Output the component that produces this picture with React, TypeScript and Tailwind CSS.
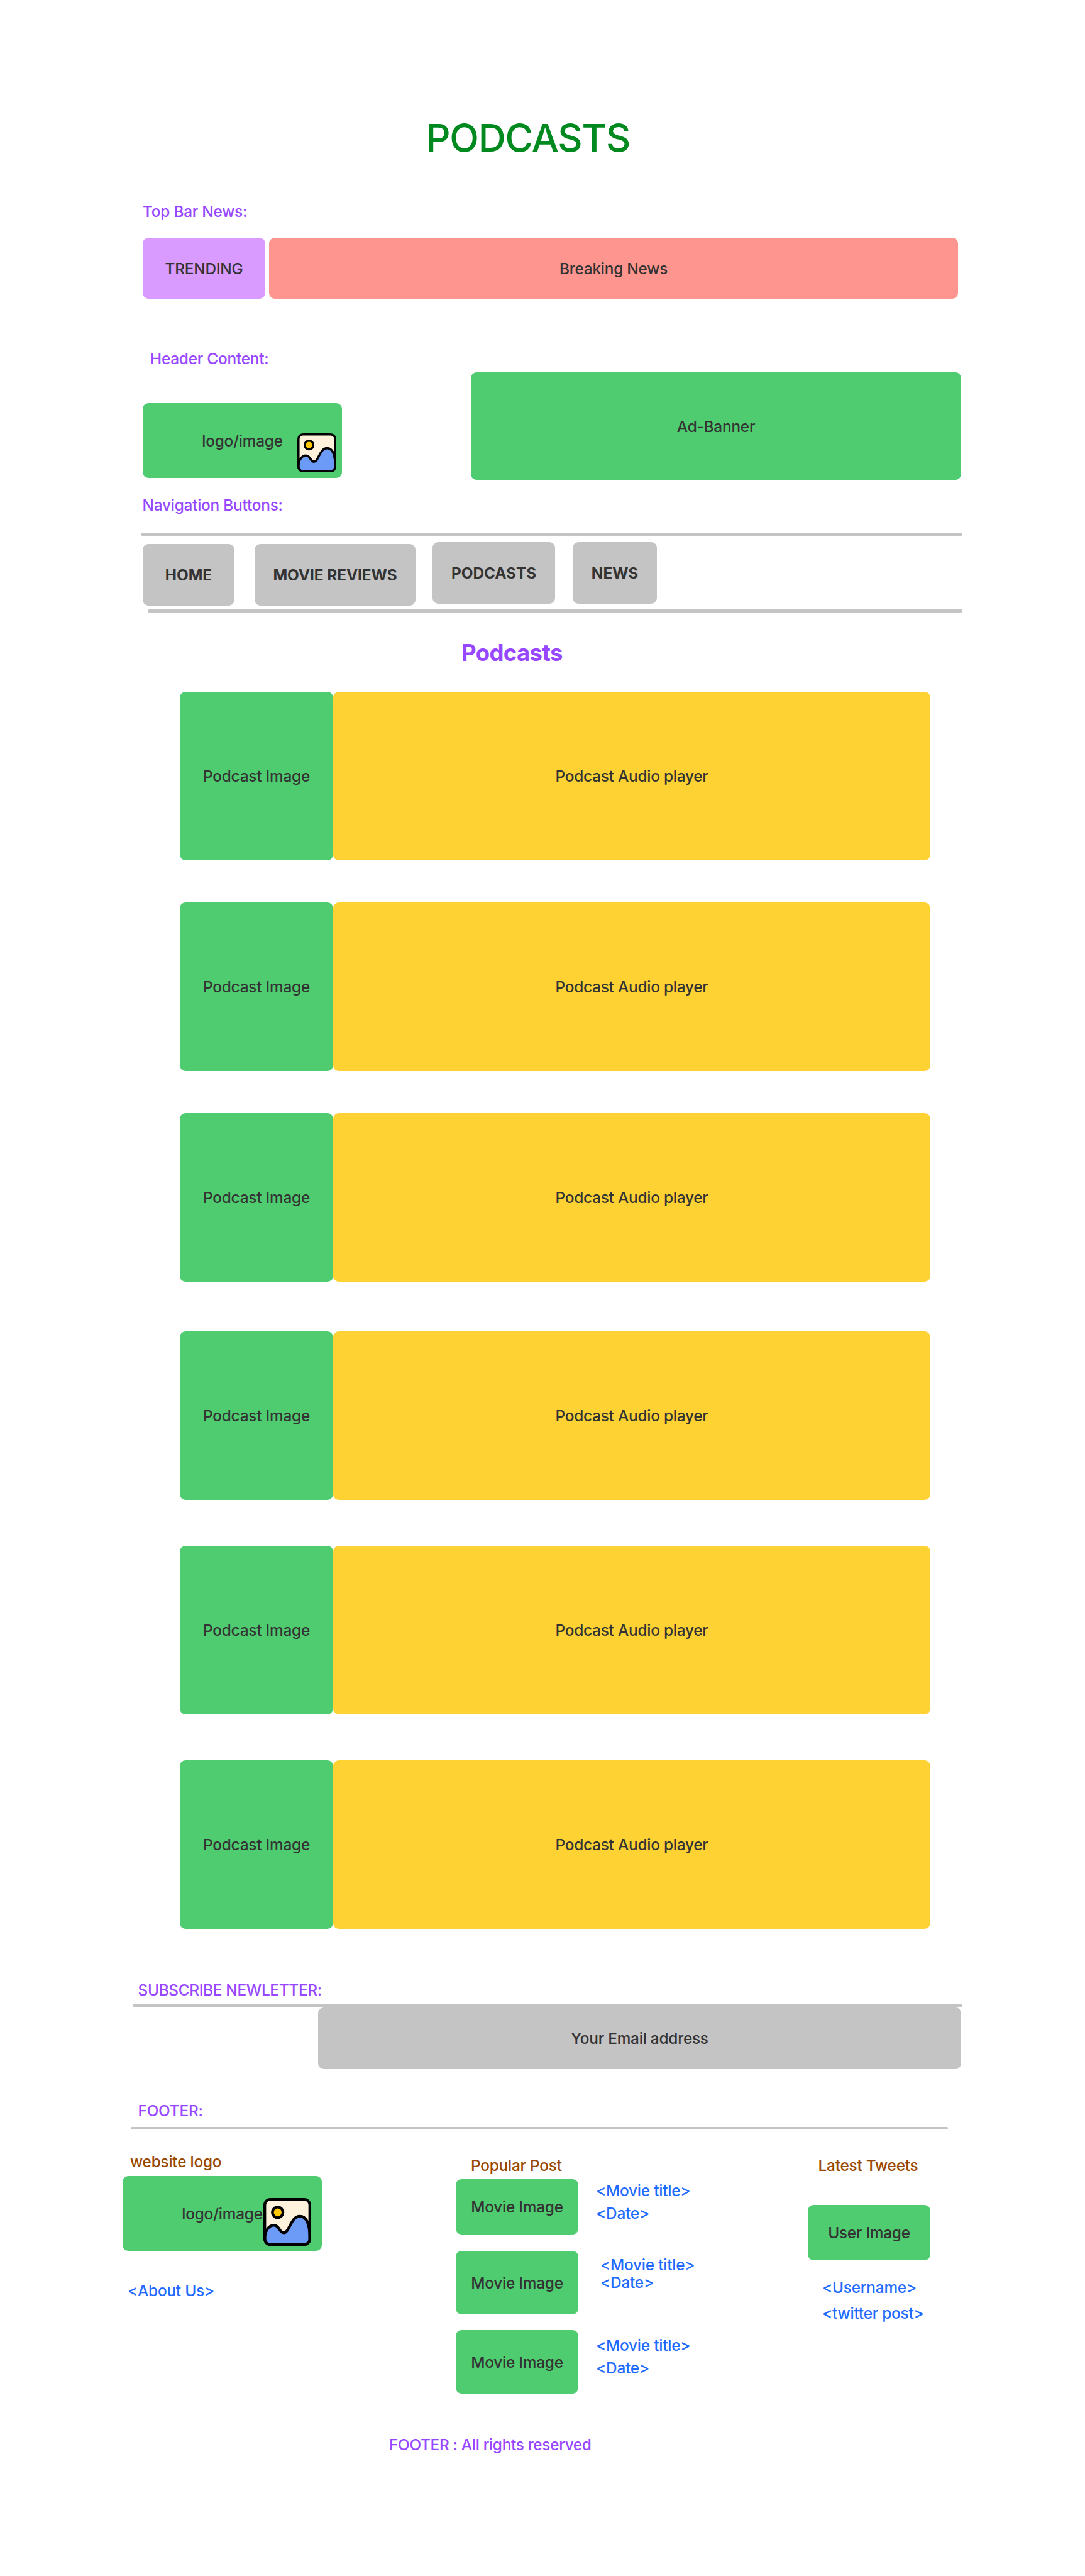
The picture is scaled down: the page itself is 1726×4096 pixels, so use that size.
import type { ReactNode } from "react";

function Box({ className, children }: { className: string; children: ReactNode }) {
  return (
    <div className={`flex shrink-0 items-center justify-center whitespace-nowrap rounded-[9px] ${className}`}>
      {children}
    </div>
  );
}

function Rule({ className }: { className: string }) {
  return <div className={`rounded-full bg-[#c4c4c4] ${className}`} />;
}

function PictureIcon({ className }: { className: string }) {
  return (
    <svg viewBox="0 0 244 244" className={className} aria-hidden="true">
      <rect x="7" y="7" width="230" height="230" rx="28" fill="#fff2dc" />
      <path
        d="M7 206C7 168 28 139 54 139C83 139 80 178 105 178C132 178 140 93 186 93C224 93 237 140 237 206V209A28 28 0 0 1 209 237H35A28 28 0 0 1 7 209Z"
        fill="#6b9bf7"
        stroke="#000"
        strokeWidth="14"
        strokeLinejoin="round"
      />
      <rect x="7" y="7" width="230" height="230" rx="28" fill="none" stroke="#000" strokeWidth="14" />
      <circle cx="73" cy="73" r="27" fill="#ffc700" stroke="#000" strokeWidth="14" />
    </svg>
  );
}

const episodes = ["mt-[40px]", "mt-[67px]", "mt-[67px]", "mt-[79px]", "mt-[73px]", "mt-[73px]"];

const posts = [
  { row: "mt-[7px] h-[88px]", text: "ml-[28px] pt-[3px]", date: "mt-[6px]" },
  { row: "mt-[26px] h-[101px]", text: "ml-[35px] pt-[7px]", date: "-mt-[2px]" },
  { row: "mt-[25px] h-[101px]", text: "ml-[28px] pt-[9px]", date: "mt-[6px]" },
];

export default function App() {
  return (
    <main className="flex h-[4096px] w-[1726px] flex-col overflow-hidden bg-white font-['Inter',sans-serif] text-[24.36px] font-[450] leading-[30px] tracking-[-0.009em] text-[#333333]">
      <h1 className="ml-[677.5px] mt-[183px] self-start text-[60.9px] font-medium leading-[72px] tracking-[-0.02em] text-[#00891f]">
        PODCASTS
      </h1>

      <section className="mt-[66px]">
        <p className="ml-[227px] text-[#9747ff]">Top Bar News:</p>
        <div className="ml-[227px] mt-[27px] flex gap-[6px]">
          <Box className="h-[97px] w-[195px] bg-[#d99bff]">TRENDING</Box>
          <Box className="h-[97px] w-[1096px] bg-[#ff958f]">Breaking News</Box>
        </div>
      </section>

      <header className="ml-[227px] mt-[80px] flex h-[208px]">
        <div className="w-[317px]">
          <p className="ml-[12px] text-[#9747ff]">Header Content:</p>
          <div className="relative mt-[56px]">
            <Box className="h-[119px] w-[317px] bg-[#4fcc70]">logo/image</Box>
            <PictureIcon className="absolute left-[246px] top-[48px] size-[62px]" />
          </div>
        </div>
        <Box className="ml-[205px] mt-[37px] h-[171px] w-[780px] bg-[#4fcc70]">Ad-Banner</Box>
      </header>

      <section className="mt-[25px]">
        <p className="ml-[226.5px] text-[#9747ff]">Navigation Buttons:</p>
        <Rule className="ml-[224px] mt-[29px] h-[5px] w-[1307px]" />
        <nav className="ml-[227px] flex h-[117px] pt-[10px] font-bold tracking-[-0.002em]">
          <Box className="mt-[3px] h-[98px] w-[146px] bg-[#c4c4c4]">HOME</Box>
          <Box className="ml-[32px] mt-[3px] h-[98px] w-[256px] bg-[#c4c4c4]">MOVIE REVIEWS</Box>
          <Box className="ml-[27px] h-[98px] w-[195px] bg-[#c4c4c4]">PODCASTS</Box>
          <Box className="ml-[28px] h-[98px] w-[134px] bg-[#c4c4c4]">NEWS</Box>
        </nav>
        <Rule className="ml-[235px] h-[5px] w-[1296px]" />
      </section>

      <section className="mt-[42px]">
        <h2 className="ml-[734px] text-[36.55px] font-bold leading-[44px] tracking-[-0.018em] text-[#9747ff]">
          Podcasts
        </h2>
        {episodes.map((spacing, i) => (
          <article key={i} className={`ml-[286px] flex ${spacing}`}>
            <Box className="h-[268px] w-[244px] bg-[#4fcc70]">Podcast Image</Box>
            <Box className="h-[268px] w-[950px] bg-[#ffd233]">Podcast Audio player</Box>
          </article>
        ))}
      </section>

      <section className="mt-[82px]">
        <p className="ml-[219.5px] tracking-[-0.013em] text-[#9747ff]">SUBSCRIBE NEWLETTER:</p>
        <Rule className="ml-[211px] mt-[8px] h-[4px] w-[1320px]" />
        <Box className="ml-[506px] mt-px h-[98px] w-[1023px] bg-[#c4c4c4]">Your Email address</Box>
      </section>

      <footer className="mt-[51px]">
        <p className="ml-[219.5px] text-[#9747ff]">FOOTER:</p>
        <Rule className="ml-[208px] mt-[11px] h-[4px] w-[1300px]" />
        <div className="ml-[195px] flex h-[420px]">
          <div className="w-[317px] pt-[36px]">
            <p className="ml-[12px] text-[#994800]">website logo</p>
            <div className="relative mt-[8px]">
              <Box className="h-[119px] w-[317px] bg-[#4fcc70]">logo/image</Box>
              <PictureIcon className="absolute left-[224px] top-[35px] size-[76px]" />
            </div>
            <p className="ml-[8px] mt-[48px] text-[#1f6bff]">&lt;About Us&gt;</p>
          </div>

          <div className="ml-[213px] w-[400px] pt-[42px]">
            <p className="ml-[24px] text-[#994800]">Popular Post</p>
            {posts.map((post, i) => (
              <div key={i} className={`flex ${post.row}`}>
                <Box className="w-[195px] bg-[#4fcc70]">Movie Image</Box>
                <div className={`flex flex-col text-[#1f6bff] ${post.text}`}>
                  <span>&lt;Movie title&gt;</span>
                  <span className={post.date}>&lt;Date&gt;</span>
                </div>
              </div>
            ))}
          </div>

          <div className="ml-[160px] pt-[42px]">
            <p className="ml-[16.5px] text-[#994800]">Latest Tweets</p>
            <Box className="mt-[48px] h-[88px] w-[195px] bg-[#4fcc70]">User Image</Box>
            <div className="ml-[23px] mt-[28px] flex flex-col gap-[11px] text-[#1f6bff]">
              <span>&lt;Username&gt;</span>
              <span>&lt;twitter post&gt;</span>
            </div>
          </div>
        </div>
        <p className="ml-[619px] mt-[66px] tracking-[-0.013em] text-[#9747ff]">FOOTER : All rights reserved</p>
      </footer>
    </main>
  );
}
